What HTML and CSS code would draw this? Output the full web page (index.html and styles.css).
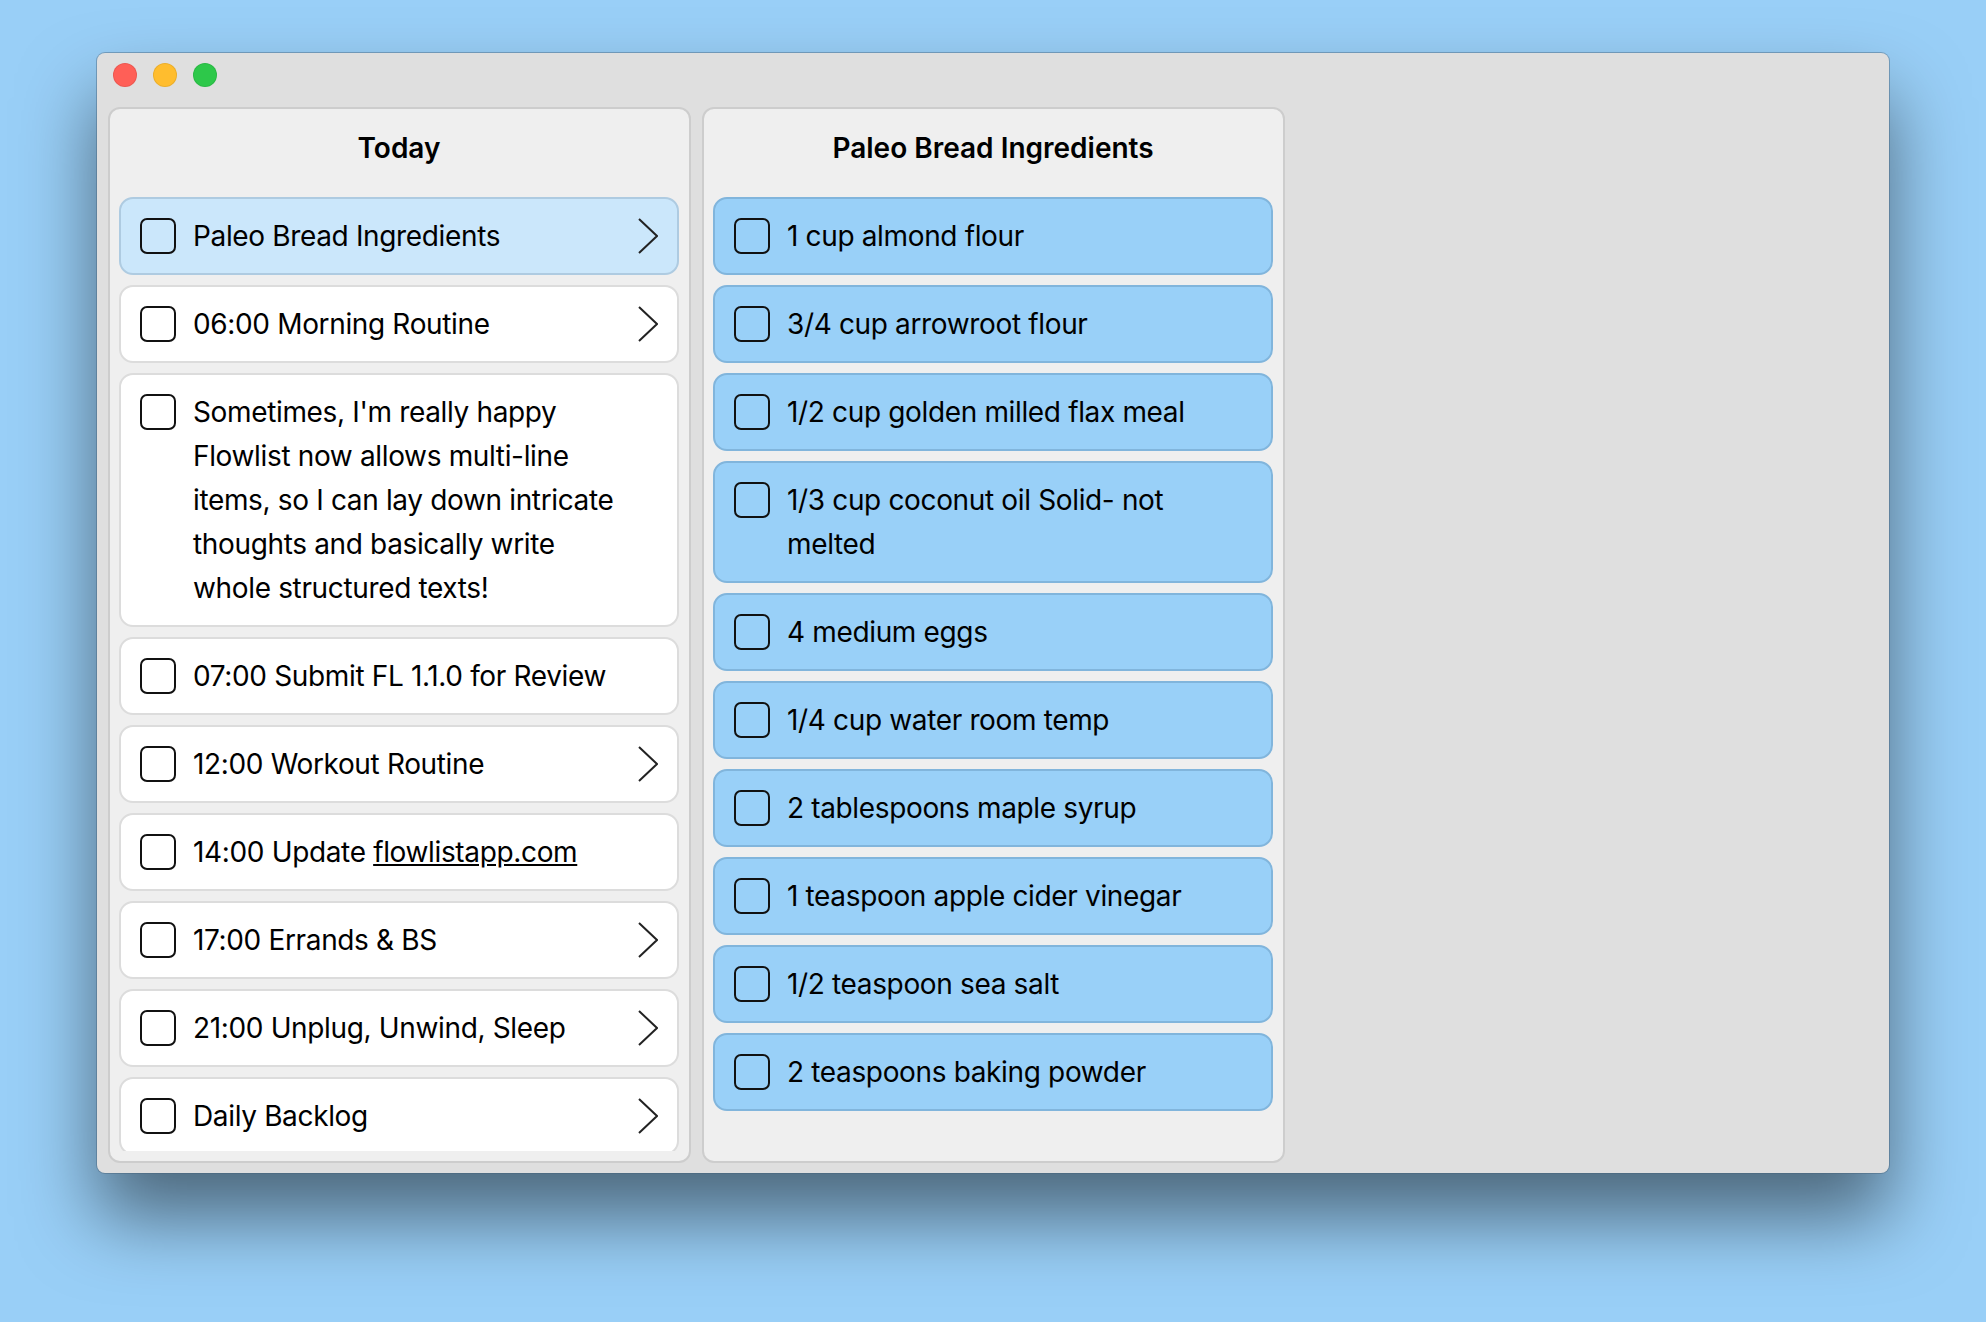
FILE: index.html
```html
<!DOCTYPE html>
<html lang="en">
<head>
  <meta charset="UTF-8">
  <title>Flowlist</title>
  <link rel="stylesheet" href="styles.css">
</head>
<body>
  <div class="window">
    <div class="titlebar">
      <span class="light light-red"></span>
      <span class="light light-yellow"></span>
      <span class="light light-green"></span>
    </div>
    <div class="panels">
      <section class="panel">
        <h2 class="panel-title">Today</h2>
        <div class="list">
          <div class="item item-selected">
            <span class="check"></span>
            <span class="item-text">Paleo Bread Ingredients</span>
            <svg class="chevron" viewBox="0 0 20 36"><path d="M1 1 L19 18 L1 35"/></svg>
          </div>
          <div class="item">
            <span class="check"></span>
            <span class="item-text">06:00 Morning Routine</span>
            <svg class="chevron" viewBox="0 0 20 36"><path d="M1 1 L19 18 L1 35"/></svg>
          </div>
          <div class="item">
            <span class="check"></span>
            <span class="item-text">Sometimes, I'm really happy Flowlist now allows multi-line items, so I can lay down intricate thoughts and basically write whole structured texts!</span>
          </div>
          <div class="item">
            <span class="check"></span>
            <span class="item-text">07:00 Submit FL 1.1.0 for Review</span>
          </div>
          <div class="item">
            <span class="check"></span>
            <span class="item-text">12:00 Workout Routine</span>
            <svg class="chevron" viewBox="0 0 20 36"><path d="M1 1 L19 18 L1 35"/></svg>
          </div>
          <div class="item">
            <span class="check"></span>
            <span class="item-text">14:00 Update <a class="link" href="#">flowlistapp.com</a></span>
          </div>
          <div class="item">
            <span class="check"></span>
            <span class="item-text">17:00 Errands &amp; BS</span>
            <svg class="chevron" viewBox="0 0 20 36"><path d="M1 1 L19 18 L1 35"/></svg>
          </div>
          <div class="item">
            <span class="check"></span>
            <span class="item-text">21:00 Unplug, Unwind, Sleep</span>
            <svg class="chevron" viewBox="0 0 20 36"><path d="M1 1 L19 18 L1 35"/></svg>
          </div>
          <div class="item">
            <span class="check"></span>
            <span class="item-text">Daily Backlog</span>
            <svg class="chevron" viewBox="0 0 20 36"><path d="M1 1 L19 18 L1 35"/></svg>
          </div>
        </div>
      </section>
      <section class="panel">
        <h2 class="panel-title">Paleo Bread Ingredients</h2>
        <div class="list">
          <div class="item item-blue"><span class="check"></span><span class="item-text">1 cup almond flour</span></div>
          <div class="item item-blue"><span class="check"></span><span class="item-text">3/4 cup arrowroot flour</span></div>
          <div class="item item-blue"><span class="check"></span><span class="item-text">1/2 cup golden milled flax meal</span></div>
          <div class="item item-blue"><span class="check"></span><span class="item-text">1/3 cup coconut oil Solid- not melted</span></div>
          <div class="item item-blue"><span class="check"></span><span class="item-text">4 medium eggs</span></div>
          <div class="item item-blue"><span class="check"></span><span class="item-text">1/4 cup water room temp</span></div>
          <div class="item item-blue"><span class="check"></span><span class="item-text">2 tablespoons maple syrup</span></div>
          <div class="item item-blue"><span class="check"></span><span class="item-text">1 teaspoon apple cider vinegar</span></div>
          <div class="item item-blue"><span class="check"></span><span class="item-text">1/2 teaspoon sea salt</span></div>
          <div class="item item-blue"><span class="check"></span><span class="item-text">2 teaspoons baking powder</span></div>
        </div>
      </section>
    </div>
  </div>
</body>
</html>
```
FILE: styles.css
```css
html, body { margin: 0; height: 100%; }
body { background-color: #99cff7; font-family: Inter, "Liberation Sans", sans-serif; color: #000; padding: 53px 0 0 97px; box-sizing: border-box; overflow: hidden; }

.window { width: 1792px; height: 1120px; display: flex; flex-direction: column; background-color: #dfdfdf; border-radius: 8px; box-shadow: 0 0 0 1px rgba(70, 100, 125, 0.45), 0 44px 76px rgba(0, 0, 0, 0.5); }

.titlebar { height: 54px; flex: none; display: flex; align-items: center; gap: 16px; padding: 0 0 11px 16px; box-sizing: border-box; }
.light { width: 24px; height: 24px; border-radius: 50%; box-sizing: border-box; border: 1px solid rgba(0, 0, 0, 0.08); }
.light-red { background-color: #ff5f57; }
.light-yellow { background-color: #ffbd2e; }
.light-green { background-color: #2dc84a; }

.panels { flex: 1; min-height: 0; display: flex; gap: 11px; padding: 0 11px 10px; }
.panel { width: 583px; box-sizing: border-box; display: flex; flex-direction: column; padding: 0 10px 10px 9px; background-color: #efefef; border: 2px solid #cdcdcd; border-radius: 12px; }
.panel-title { height: 77px; margin: 0 0 11px; flex: none; font-size: 28px; line-height: 79px; font-weight: 600; text-align: center; }

.list { flex: 1; min-height: 0; overflow: hidden; display: flex; flex-direction: column; gap: 10px; }
.item { flex: none; display: flex; align-items: flex-start; padding: 15px 19px; background-color: #fff; border: 2px solid #dcdcdc; border-radius: 14px; font-size: 28px; line-height: 44px; letter-spacing: -0.35px; }
.item-selected { background-color: #cbe7fb; border-color: #aecbe1; }
.item-blue { background-color: #99d0f8; border-color: #81b5dc; }

.check { flex: none; width: 36px; height: 36px; margin: 4px 17px 0 0; box-sizing: border-box; border: 2px solid #111; border-radius: 7px; }
.item-text { width: 436px; }
.link { color: inherit; text-decoration: underline; }
.chevron { flex: none; width: 20px; height: 36px; margin: 4px 0 0 auto; fill: none; stroke: #222; stroke-width: 2; }
```
